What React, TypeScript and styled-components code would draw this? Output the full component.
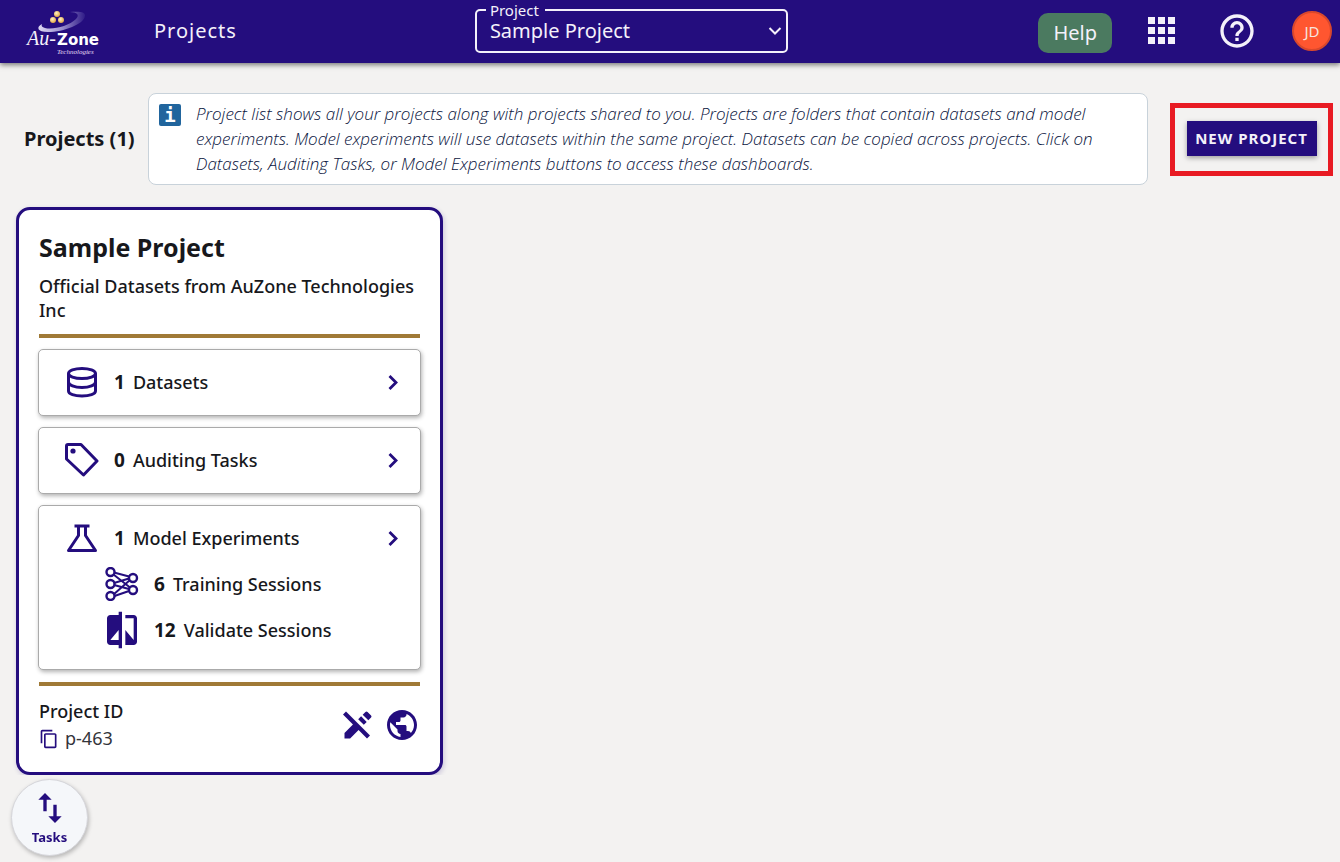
import React from "react";
import styled, { createGlobalStyle } from "styled-components";
import {
  MdCompare,
  MdContentCopy,
  MdEditOff,
  MdHelpOutline,
  MdPublic,
  MdSwapVert,
} from "react-icons/md";

const indigo = "#240d7e";
const ink = "#17181c";
const gold = "#a07a36";

const GlobalStyle = createGlobalStyle`
  *, *::before, *::after { box-sizing: border-box; }
  body {
    margin: 0;
    background: #f3f2f1;
    color: ${ink};
    font-family: "Noto Sans", "Open Sans", sans-serif;
    font-size: 18px;
  }
  button, select { font: inherit; color: inherit; }
  button { cursor: pointer; }
  h1, h2, p { margin: 0; }
`;

const TopBar = styled.header`
  display: grid;
  grid-template-columns: 14fr 313px 17fr;
  align-items: center;
  column-gap: 16px;
  height: 63px;
  padding: 0 8px 2px 24px;
  background: ${indigo};
  color: #f4f1fa;
  box-shadow: 0 2px 5px rgba(0, 0, 0, 0.5);
`;

const BarStart = styled.div`
  display: flex;
  align-items: center;
  gap: 52px;
`;

const BarEnd = styled.div`
  display: flex;
  align-items: center;
  justify-content: flex-end;
`;

const LogoLink = styled.a`
  display: flex;
  color: inherit;
`;

const SectionName = styled.span`
  font-size: 20px;
  letter-spacing: 1px;
`;

const Picker = styled.fieldset`
  align-self: start;
  min-width: 0;
  height: 51px;
  margin: 2px 0 0;
  padding: 0;
  border: 2px solid #f4f1fa;
  border-radius: 5px;
`;

const PickerLegend = styled.legend`
  margin-left: 9px;
  padding: 0 6px 0 4px;
  font-size: 15px;
  line-height: 16px;
`;

const PickerBody = styled.div`
  display: grid;
  align-items: center;

  & > * { grid-area: 1 / 1; }
  & > svg { justify-self: end; margin-right: 4px; pointer-events: none; }
`;

const PickerSelect = styled.select`
  width: 100%;
  height: 26px;
  padding: 0 32px 0 13px;
  border: 0;
  outline: 0;
  appearance: none;
  background: transparent;
  font-size: 20px;
  line-height: 26px;
`;

const HelpButton = styled.button`
  height: 40px;
  margin: 4px 35px 0 0;
  padding: 0 15px;
  border: 0;
  border-radius: 10px;
  background: #4b7a60;
  font-size: 20px;
`;

const IconButton = styled.button<{ $gap?: number }>`
  display: flex;
  margin: 0 ${(p) => p.$gap ?? 0}px 0 0;
  padding: 0;
  border: 0;
  background: none;
`;

const Avatar = styled.button`
  width: 40px;
  height: 40px;
  padding: 0;
  border: 2px solid #d9482c;
  border-radius: 50%;
  background: #ff5630;
  color: #f7e3de;
  font-size: 15px;
`;

const Intro = styled.section`
  display: flex;
  align-items: center;
  padding: 30px 7px 0 24px;
`;

const IntroTitle = styled.h1`
  flex: none;
  width: 124px;
  font-size: 20px;
  line-height: 28px;
  white-space: nowrap;
`;

const Notice = styled.div`
  flex: 1;
  display: flex;
  gap: 15px;
  min-height: 92px;
  padding: 7px 40px 8px 10px;
  border: 1px solid #c8d2da;
  border-radius: 8px;
  background: #fff;
  color: #0a1440;
  font-family: "Open Sans", sans-serif;
  font-size: 17px;
  font-style: italic;
  font-weight: 300;
  line-height: 25px;
`;

const InfoMark = styled.span`
  flex: none;
  width: 22px;
  height: 22px;
  margin-top: 3px;
  border-radius: 2px;
  background: #21659d;
  color: #fff;
  font: bold 19px/22px "DejaVu Sans Mono", monospace;
  text-align: center;
`;

const Highlight = styled.div`
  flex: none;
  display: flex;
  align-items: center;
  justify-content: center;
  width: 163px;
  height: 73px;
  margin-left: 22px;
  padding-bottom: 2px;
  border: 5px solid #e81b23;
`;

const NewProject = styled.button`
  width: 130px;
  height: 35px;
  padding: 0;
  border: 0;
  background: ${indigo};
  color: #f4f1fa;
  font-size: 15px;
  font-weight: 700;
  letter-spacing: 1px;
  white-space: nowrap;
  box-shadow: 0 2px 5px rgba(0, 0, 0, 0.35);
`;

const Card = styled.article`
  width: 427px;
  margin: 22px 0 0 16px;
  padding: 20px;
  border: 3px solid ${indigo};
  border-radius: 14px;
  background: #fff;
  box-shadow: 1px 2px 5px rgba(36, 13, 126, 0.2);
`;

const CardTitle = styled.h2`
  font-size: 25px;
  line-height: 34px;
`;

const CardText = styled.p`
  margin-top: 10px;
  font-weight: 500;
  line-height: 24px;
`;

const Rule = styled.hr`
  height: 4px;
  margin: 12px 0 11px;
  border: 0;
  background: ${gold};
`;

const Panels = styled.div`
  display: grid;
  gap: 11px;
  margin: 0 -1px;
`;

const Panel = styled.div`
  padding: 9px 0 10px;
  border: 1px solid #aaa;
  border-radius: 5px;
  background: #fff;
  box-shadow: 1px 2px 4px rgba(0, 0, 0, 0.3);

  &:last-child { padding-bottom: 16px; }
`;

const PanelRow = styled.button<{ $nested?: boolean }>`
  display: flex;
  align-items: center;
  width: 100%;
  height: 46px;
  padding: 0 15px 0 ${(p) => (p.$nested ? 66 : 26)}px;
  border: 0;
  background: none;
  color: ${ink};
  font-weight: 500;
  text-align: left;

  & > svg { flex: none; color: ${indigo}; }
`;

const IconSlot = styled.span`
  flex: none;
  display: flex;
  align-items: center;
  justify-content: center;
  width: 34px;
  color: ${indigo};

  & > svg { flex: none; }
`;

const Count = styled.strong`
  margin: 0 8px 0 15px;
  font-size: 19px;
  font-weight: 700;
`;

const RowName = styled.span`
  flex: 1;
`;

const CardFoot = styled.footer`
  display: flex;
  align-items: center;
  justify-content: space-between;
`;

const IdLabel = styled.div`
  font-weight: 500;
  line-height: 28px;
`;

const IdValue = styled.div`
  display: flex;
  align-items: center;
  gap: 6px;
  color: #33343a;
  line-height: 27px;
`;

const FootActions = styled.div`
  display: flex;
  align-items: center;
  gap: 8px;
  color: ${indigo};
`;

const TasksButton = styled.button`
  position: fixed;
  left: 11px;
  bottom: 6px;
  display: flex;
  flex-direction: column;
  align-items: center;
  width: 77px;
  height: 77px;
  padding: 8px 0 0;
  border: 1px solid #d5d5da;
  border-radius: 50%;
  background: #f5f7fa;
  color: ${indigo};
  font-size: 13px;
  font-weight: 700;
  line-height: 18px;
  box-shadow: 1px 2px 4px rgba(0, 0, 0, 0.25);
`;

const Logo = () => (
  <svg width="78" height="48" viewBox="0 0 78 48" role="img" aria-label="Au-Zone Technologies">
    <defs>
      <linearGradient id="swoosh" x1="0" y1="0" x2="1" y2="0">
        <stop offset="0" stopColor="#ddd8f2" />
        <stop offset="0.5" stopColor="#9a8fce" />
        <stop offset="1" stopColor="#2f1b87" />
      </linearGradient>
      <radialGradient id="bead" cx="0.4" cy="0.35" r="0.7">
        <stop offset="0" stopColor="#fff3c4" />
        <stop offset="1" stopColor="#dfa23c" />
      </radialGradient>
    </defs>
    <path
      d="M18 17C12 20 13 25 24 25C40 25 60 17 61 9C62 5 56 4 46 5C53 5 56 8 52 12C45 19 29 23 21 21C18 20 17 19 18 17Z"
      fill="url(#swoosh)"
    />
    <circle cx="33" cy="7" r="3" fill="url(#bead)" />
    <circle cx="29" cy="13" r="3" fill="url(#bead)" />
    <circle cx="37" cy="13" r="3" fill="url(#bead)" />
    <text x="3" y="38" fill="#f4f1fa" fontFamily="Liberation Serif, serif" fontStyle="italic" fontSize="20">Au-</text>
    <text x="33" y="38" fill="#fff" fontFamily="DejaVu Sans, sans-serif" fontWeight="700" fontSize="15">Zone</text>
    <text x="33" y="47" fill="#e4dff4" fontFamily="Liberation Serif, serif" fontStyle="italic" fontSize="7">Technologies</text>
  </svg>
);

const DatabaseIcon = () => (
  <svg width="34" height="34" viewBox="0 0 34 34" fill="none" stroke="currentColor" strokeWidth="3">
    <ellipse cx="17" cy="8.500" rx="13.500" ry="5" />
    <path d="M3.500 8.500V26C3.500 29 9.500 31 17 31S30.500 29 30.500 26V8.500M3.500 17C3.500 20 9.500 22.500 17 22.500S30.500 20 30.500 17" />
  </svg>
);

const TagIcon = () => (
  <svg width="34" height="34" viewBox="0 0 34 34" fill="none" stroke="currentColor" strokeWidth="3" strokeLinejoin="round">
    <path d="M3 1.500H16L32 18L18.500 32L1.500 16V3Q1.500 1.500 3 1.500Z" />
    <circle cx="8" cy="8" r="2.600" fill="currentColor" stroke="none" />
  </svg>
);

const FlaskIcon = () => (
  <svg width="34" height="34" viewBox="0 0 34 34" fill="none" stroke="currentColor" strokeWidth="3" strokeLinejoin="round">
    <path d="M9.500 5H24.500M13.500 5V14.500L3.500 29.500H30.500L20.500 14.500V5" />
  </svg>
);

const NetworkIcon = () => (
  <svg width="34" height="34" viewBox="0 0 34 34" fill="none" stroke="currentColor" strokeWidth="2">
    <path d="M9 5.500L24 9.500M8.500 7.500L25 20.500M9 16L24 11.500M9 18L24 22M8.500 27.500L25 13M9.500 29L24 24" />
    <g strokeWidth="2.400" fill="#fff">
      <circle cx="5.500" cy="5" r="4" />
      <circle cx="5.500" cy="17" r="4" />
      <circle cx="5.500" cy="29" r="4" />
      <circle cx="28" cy="11" r="4" />
      <circle cx="28" cy="23" r="4" />
    </g>
  </svg>
);

const ChevronIcon = () => (
  <svg width="24" height="24" viewBox="0 0 24 24" fill="none" stroke="currentColor" strokeWidth="2.800">
    <path d="M8.500 6L15 12.500L8.500 19" />
  </svg>
);

interface RowProps {
  icon: React.ReactNode;
  count: number;
  name: string;
  nested?: boolean;
}

const StatRow = ({ icon, count, name, nested }: RowProps) => (
  <PanelRow type="button" $nested={nested}>
    <IconSlot>{icon}</IconSlot>
    <Count>{count}</Count>
    <RowName>{name}</RowName>
    {!nested && <ChevronIcon />}
  </PanelRow>
);

export default function App() {
  return (
    <>
      <GlobalStyle />
      <TopBar>
        <BarStart>
          <LogoLink href="#"><Logo /></LogoLink>
          <SectionName>Projects</SectionName>
        </BarStart>
        <Picker>
          <PickerLegend><label htmlFor="project">Project</label></PickerLegend>
          <PickerBody>
            <PickerSelect id="project">
              <option>Sample Project</option>
            </PickerSelect>
            <svg width="14" height="10" viewBox="0 0 14 10" fill="none" stroke="currentColor" strokeWidth="2">
              <path d="M1.500 2L7 7.500L12.500 2" />
            </svg>
          </PickerBody>
        </Picker>
        <BarEnd>
          <HelpButton type="button">Help</HelpButton>
          <IconButton type="button" aria-label="Apps" $gap={41}>
            <svg width="29" height="29" viewBox="0 0 29 29" fill="currentColor">
              {[1, 11, 21].map((y) => [1, 11, 21].map((x) => (
                <rect key={`${x}-${y}`} x={x} y={y} width="7" height="7" />
              )))}
            </svg>
          </IconButton>
          <IconButton type="button" aria-label="Documentation" $gap={35}>
            <MdHelpOutline size={40} />
          </IconButton>
          <Avatar type="button">JD</Avatar>
        </BarEnd>
      </TopBar>
      <main>
        <Intro>
          <IntroTitle>Projects (1)</IntroTitle>
          <Notice>
            <InfoMark aria-hidden="true">i</InfoMark>
            <p>
              Project list shows all your projects along with projects shared to you. Projects are
              folders that contain datasets and model experiments. Model experiments will use
              datasets within the same project. Datasets can be copied across projects. Click on
              Datasets, Auditing Tasks, or Model Experiments buttons to access these dashboards.
            </p>
          </Notice>
          <Highlight><NewProject type="button">NEW PROJECT</NewProject></Highlight>
        </Intro>
        <Card>
          <CardTitle>Sample Project</CardTitle>
          <CardText>Official Datasets from AuZone Technologies Inc</CardText>
          <Rule />
          <Panels>
            <Panel><StatRow icon={<DatabaseIcon />} count={1} name="Datasets" /></Panel>
            <Panel><StatRow icon={<TagIcon />} count={0} name="Auditing Tasks" /></Panel>
            <Panel>
              <StatRow icon={<FlaskIcon />} count={1} name="Model Experiments" />
              <StatRow nested icon={<NetworkIcon />} count={6} name="Training Sessions" />
              <StatRow nested icon={<MdCompare size={40} />} count={12} name="Validate Sessions" />
            </Panel>
          </Panels>
          <Rule />
          <CardFoot>
            <div>
              <IdLabel>Project ID</IdLabel>
              <IdValue>
                <IconButton type="button" aria-label="Copy project ID">
                  <MdContentCopy size={20} color={indigo} />
                </IconButton>
                p-463
              </IdValue>
            </div>
            <FootActions>
              <IconButton type="button" aria-label="Editing disabled"><MdEditOff size={36} /></IconButton>
              <IconButton type="button" aria-label="Public project"><MdPublic size={36} /></IconButton>
            </FootActions>
          </CardFoot>
        </Card>
      </main>
      <TasksButton type="button">
        <MdSwapVert size={40} />
        Tasks
      </TasksButton>
    </>
  );
}
